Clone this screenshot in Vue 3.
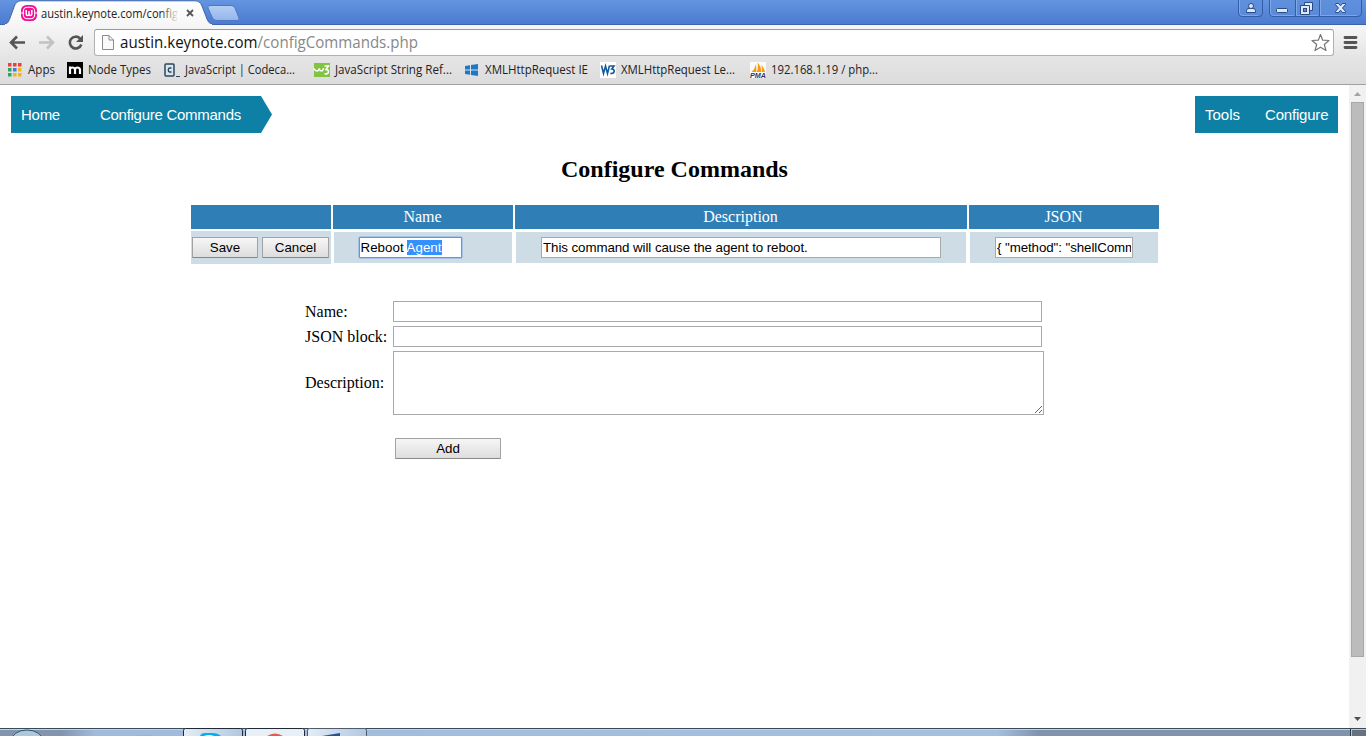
<script setup>
import { ref } from 'vue'

const bookmarks = [
  { icon: 'apps', label: 'Apps', width: 27, gap: 12 },
  { icon: 'node', label: 'Node Types', width: 63, gap: 13 },
  { icon: 'code', label: 'JavaScript | Codeca...', width: 110, gap: 19 },
  { icon: 'w3s', label: 'JavaScript String Ref...', width: 117, gap: 12 },
  { icon: 'win', label: 'XMLHttpRequest IE', width: 103, gap: 12 },
  { icon: 'w3c', label: 'XMLHttpRequest Le...', width: 114, gap: 15 },
  { icon: 'pma', label: '192.168.1.19 / php...', width: 107, gap: 0 }
]
const dots = ['#e8423a', '#e8423a', '#e8423a', '#2da562', '#3b7de8', '#f5b21a', '#2da562', '#f5b21a', '#f5b21a']
const description = ref('This command will cause the agent to reboot.')
const json = ref('{ "method": "shellCommand" }')
const form = ref({ name: '', json: '', description: '' })
</script>

<template>
  <div class="window">
    <header class="titlebar">
      <svg class="frame" width="1366" height="25" viewBox="0 0 1366 25">
        <defs>
          <linearGradient id="tab" x1="0" y1="0" x2="0" y2="1"><stop offset="0" stop-color="#fff" /><stop offset="1" stop-color="#f6f6f6" /></linearGradient>
          <linearGradient id="fade" x1="0" x2="1" y1="0" y2="0"><stop offset="0" stop-color="#fbfbfb" stop-opacity="0" /><stop offset="1" stop-color="#fbfbfb" /></linearGradient>
          <linearGradient id="newtab" x1="0" y1="0" x2="0" y2="1"><stop offset="0" stop-color="#b5cdf4" /><stop offset="1" stop-color="#94b5ec" /></linearGradient>
        </defs>
        <path d="M0 24.5H1366" stroke="#3c63ae" />
        <path d="M0 25C7 25 8 23 10 18L14 7Q16 .8 21 .8H195Q200 .8 202 6L207 19Q209 25 216 25Z" fill="url(#tab)" stroke="#3f65ae" />
        <rect x="5" y="24" width="207" height="1" fill="#f6f6f6" />
        <path d="M209 5.5H231Q234 5.5 235 8L239 18Q240 20.500 237 20.500H217Q213 20.500 212 17L208 8Q207 5.500 210 5.500Z" fill="url(#newtab)" stroke="#4c78c6" />
        <rect x="21" y="5" width="16" height="16" rx="5.500" fill="#f50f97" />
        <rect x="23.300" y="7.300" width="11.400" height="11.400" rx="4" fill="none" stroke="#fff" stroke-width="1.100" />
        <path d="M26.200 10v4q0 1.500 1.400 1.500t1.400-1.500v-3v3q0 1.500 1.400 1.500t1.400-1.500v-4" fill="none" stroke="#fff" stroke-width="1.500" />
        <path d="M21 13h2.500M34.500 13h2.500" stroke="#fff" />
        <text class="ui" x="41" y="17.500" font-size="12" textLength="137" lengthAdjust="spacingAndGlyphs" fill="#222">austin.keynote.com/config</text>
        <rect x="161" y="4" width="18" height="18" fill="url(#fade)" />
        <path d="M187 10l6 6M193 10l-6 6" stroke="#555" stroke-width="1.800" />
        <g fill="#5d8edb" fill-opacity=".6" stroke="#345da9">
          <path d="M1238.500 0V13Q1238.500 16.500 1242 16.500H1259Q1262.500 16.500 1262.500 13V0" />
          <path d="M1269.500 0V13Q1269.500 16.500 1273 16.500H1358Q1361.500 16.500 1361.500 13V0M1295.500 0V16M1319.500 0V16" />
        </g>
        <g fill="none" stroke="#8eb2ec" stroke-opacity=".7"><path d="M1239.500 0V12Q1239.500 15.500 1243 15.500H1258M1270.500 0V12Q1270.500 15.500 1274 15.500H1294M1296.500 0V15.500H1318M1320.500 0V15.500H1357" /></g>
        <g fill="#dce8fb" stroke="#294a83">
          <path d="M1246.500 12.500V10.500Q1246.500 8.500 1249 8.500H1253Q1255.500 8.500 1255.500 10.500V12.500Z" /><circle cx="1251" cy="6" r="2.500" />
          <rect x="1276.500" y="8.500" width="11" height="4" rx="1" />
          <path d="M1304.500 2.500H1312.500V10.500H1304.500Z" />
          <path d="M1300.500 5.500H1309.500V14.500H1300.500Z" /><rect x="1303.500" y="8.500" width="3" height="3" fill="#6292df" />
          <path d="M1336 3.500H1338.500L1340.500 5.800L1342.500 3.500H1345.500V4.500L1342.500 8L1345.500 11.500V12.500H1342.500L1340.500 10.200L1338.500 12.500H1335.500V11.500L1338.500 8L1335.500 4.500Z" />
        </g>
      </svg>
    </header>

    <div class="toolbar">
      <svg class="nav" width="94" height="31" viewBox="0 25 94 31">
        <g fill="none" stroke="#555" stroke-width="2.600"><path d="M11.500 42.500H25M17 36.500L11 42.500L17 48.500" /><path d="M39 42.500H52.500M47 36.500L53 42.500L47 48.500" stroke="#c2c2c2" /><path d="M80 38.500A5.900 5.900 0 1 0 81.300 44.500" /></g>
        <path d="M83 35V42H76Z" fill="#555" />
      </svg>
      <div class="omnibox">
        <svg width="340" height="25" viewBox="95 30 340 25">
          <path d="M102.500 35.500H109L113.500 40V49.500H102.500ZM109 35.500V40H113.500" fill="#fafafa" stroke="#8b8b8b" />
          <text class="ui" x="120" y="48" font-size="16" textLength="298" lengthAdjust="spacingAndGlyphs" fill="#111">austin.keynote.com<tspan fill="#888">/configCommands.php</tspan></text>
        </svg>
        <svg width="24" height="25" viewBox="1309 30 24 25"><path d="M1320.500 34.500L1322.700 40.200L1329 40.500L1324.300 44.500L1326 50.500L1320.500 47.200L1315 50.500L1316.700 44.500L1312 40.500L1318.300 40.200Z" fill="#fff" stroke="#777" stroke-linejoin="round" stroke-width="1.200" /></svg>
      </div>
      <svg class="menu" width="32" height="31" viewBox="1334 25 32 31"><path d="M1345 37.500H1356M1345 42.500H1356M1345 47.500H1356" stroke="#555" stroke-width="2.800" stroke-linecap="round" /></svg>
    </div>

    <nav class="bookmarks">
      <div v-for="b in bookmarks" :key="b.label" class="bookmark" :style="{ marginRight: b.gap + 'px' }">
        <svg v-if="b.icon === 'apps'" class="bi" width="16" height="16"><rect v-for="(c, i) in dots" :key="i" :x="(i % 3) * 5" :y="1 + Math.floor(i / 3) * 5" width="3.500" height="3.500" :fill="c" /></svg>
        <svg v-else-if="b.icon === 'node'" class="bi" width="16" height="16"><rect width="16" height="16" fill="#000" /><path d="M3 12V4.500M3 7Q3.500 5.500 5.500 5.500T8 7.500V12M8 7.500Q8.500 5.500 10.500 5.500T13 7.500V12" fill="none" stroke="#fff" stroke-width="2.200" /></svg>
        <svg v-else-if="b.icon === 'code'" class="bi" width="16" height="16"><rect x="1" y="2" width="9" height="12" rx="1" fill="#dce5ea" stroke="#29485e" stroke-width="1.500" /><path d="M7.500 6H5.500Q4.300 6 4.300 8T5.500 10H7.500" fill="none" stroke="#29485e" stroke-width="1.400" /><path d="M12 14.500H16" stroke="#29485e" /></svg>
        <svg v-else-if="b.icon === 'w3s'" class="bi" width="16" height="16"><rect y="1" width="16" height="14" fill="#83c342" /><path d="M0 6.500Q1 9 3 9T5 6.500Q6 9 7.500 9T9.500 6M10.500 4H14.500L12 7.500Q14.500 7.500 14.500 9.800T10.500 12" fill="none" stroke="#fff" stroke-width="1.500" /></svg>
        <svg v-else-if="b.icon === 'win'" class="bi" width="16" height="16"><path d="M1 4L6 3.200V7.500H1ZM7 3L14 2V7.500H7ZM1 8.500H6V12.800L1 12ZM7 8.500H14V14L7 13Z" fill="#1979ca" /></svg>
        <svg v-else-if="b.icon === 'w3c'" class="bi" width="16" height="16"><rect width="16" height="16" fill="#fff" /><path d="M1.500 3.500L3.500 11.500L5.500 4L7.500 11.500L9.500 3.500M10 4H14L11.800 7Q14.200 7 14.200 9.300T10.300 11.500" fill="none" stroke="#125b9c" stroke-width="1.600" /></svg>
        <svg v-else class="bi" width="16" height="16"><rect width="16" height="16" fill="#fafafa" /><path d="M1.500 10Q5 7 6 2L6.500 10ZM7 10Q8.500 5 7.500 .5Q11 4 11.500 10ZM12 10Q12.500 6 11 3Q14.500 6 15 10Z" fill="#f79a0c" /><text class="pma" x="0" y="15.500" textLength="16" lengthAdjust="spacingAndGlyphs">PMA</text></svg>
        <svg class="label" :width="b.width" height="18"><text class="ui" x="0" y="13" font-size="12" :textLength="b.width" lengthAdjust="spacingAndGlyphs" fill="#222">{{ b.label }}</text></svg>
      </div>
    </nav>

    <div class="viewport">
      <main class="page">
        <div class="topnav">
          <div class="crumbs"><span>Home</span><span>Configure Commands</span></div>
          <div class="tools"><span>Tools</span><span>Configure</span></div>
        </div>
        <h2>Configure Commands</h2>
        <div class="grid">
          <div class="th"></div><div class="th">Name</div><div class="th">Description</div><div class="th">JSON</div>
          <div class="td actions"><button>Save</button><button>Cancel</button></div>
          <div class="td"><div class="field focused">Reboot <mark>Agent</mark></div></div>
          <div class="td"><input v-model="description" class="field"></div>
          <div class="td"><input v-model="json" class="field"></div>
        </div>
        <form class="form" @submit.prevent>
          <label>Name:</label><input v-model="form.name">
          <label>JSON block:</label><input v-model="form.json">
          <label>Description:</label><textarea v-model="form.description"></textarea>
          <button class="add">Add</button>
        </form>
      </main>
      <aside class="scrollbar">
        <svg width="17" height="17"><path d="M5 11L8.500 7L12 11Z" fill="#a3a3a3" /></svg>
        <div class="thumb"></div>
        <svg width="17" height="17"><path d="M5 6H12L8.500 10Z" fill="#505050" /></svg>
      </aside>
    </div>

    <footer class="taskbar">
      <svg width="1366" height="8" viewBox="0 728 1366 8">
        <defs>
          <linearGradient id="task"><stop offset="0" stop-color="#8295ad" /><stop offset=".045" stop-color="#8295ad" /><stop offset=".07" stop-color="#a2bbdc" /><stop offset=".73" stop-color="#a6bfdf" /><stop offset=".76" stop-color="#8094ae" /><stop offset="1" stop-color="#8094ae" /></linearGradient>
          <linearGradient id="btn"><stop offset="0" stop-color="#e3edf5" /><stop offset="1" stop-color="#b2c7df" /></linearGradient>
        </defs>
        <rect y="728" width="1366" height="8" fill="url(#task)" />
        <path d="M0 728.500H1366" stroke="#3b4a5a" /><path d="M0 729.500H1366" stroke="#c0d5e9" />
        <ellipse cx="27" cy="741" rx="16" ry="11" fill="#afc7d6" stroke="#2a5678" />
        <rect x="137" y="735" width="15" height="1" fill="#c5b178" />
        <rect x="183.500" y="728.500" width="59" height="10" rx="2" fill="url(#btn)" stroke="#1f2a36" />
        <rect x="245.500" y="728.500" width="59" height="10" rx="2" fill="#e8eff6" stroke="#1f2a36" />
        <rect x="307.500" y="728.500" width="59" height="10" rx="2" fill="url(#btn)" stroke="#4c5c6e" />
        <path d="M200 736Q201 733 205 733H212Q218 733 221 736Z" fill="#00aff0" /><path d="M204 736Q209 734 214 736Z" fill="#fff" />
        <path d="M267 736Q275 731 283 736Z" fill="#e25b4e" /><path d="M322 736L340 733V736Z" fill="#2b5298" />
        <rect x="1351.500" y="729.500" width="16" height="10" fill="#66737f" stroke="#b9c5cf" /><path d="M1350.500 729V736" stroke="#2e3842" />
      </svg>
    </footer>
  </div>
</template>

<style>
html, body { overflow: hidden; background: #fff; }
</style>

<style scoped>
* { box-sizing: border-box; }
svg { display: block; flex: none; }
.window { width: 1366px; height: 736px; display: flex; flex-direction: column; overflow: hidden; font-family: "Liberation Serif", serif; font-size: 16px; color: #000; }
.ui { font-family: "Open Sans", "Noto Sans", sans-serif; }
.label, .bi { overflow: visible; }
.pma { font: italic bold 7px "Liberation Sans", sans-serif; fill: #33336b; }
.titlebar { height: 25px; flex: none; background: linear-gradient(#6495e0, #4a79cf); }
.toolbar { height: 31px; flex: none; display: flex; background: linear-gradient(#f6f6f6, #e6e6e6); }
.omnibox { width: 1240px; height: 27px; margin-top: 4px; display: flex; justify-content: space-between; background: #fff; border: 1px solid #b0b0b0; border-top-color: #999; border-radius: 3px; }
.bookmarks { height: 29px; flex: none; display: flex; align-items: center; padding-left: 8px; background: linear-gradient(#e5e5e5, #dcdcdc); border-bottom: 1px solid #a1a1a1; }
.bookmark { display: flex; align-items: center; }
.bi { margin-right: 5px; }
.bookmark:first-child .bi { margin-right: 4px; }
.viewport { height: 643px; flex: none; display: flex; }
.page { width: 1349px; padding: 11px; }
.topnav { display: flex; justify-content: space-between; height: 37px; font: 15px/37px "Liberation Sans", Arial, sans-serif; color: #fff; }
.crumbs { width: 261px; padding-left: 10px; display: flex; gap: 40px; letter-spacing: -.27px; background: #0e7fa5; clip-path: polygon(0 0, 250px 0, 100% 50%, 250px 100%, 0 100%); }
.tools { width: 143px; padding-left: 10px; display: flex; gap: 25px; background: #0e7fa5; }
.tools span:last-child { letter-spacing: -.2px; }
h2 { height: 28px; margin: 22px 0; font-size: 24px; line-height: 28px; text-align: center; }
.grid { width: 968px; margin-left: 180px; display: grid; grid-template-columns: 140px 180px 452px 190px; column-gap: 2px; row-gap: 2px; }
.th { height: 24px; padding-right: 1px; background: #2f7fb6; color: #fff; text-align: center; line-height: 24px; }
.td { height: 31px; margin: 1px; display: flex; justify-content: center; align-items: center; background: #cedce5; }
.actions { height: 33px; margin: 0; justify-content: flex-start; gap: 4px; padding-left: 1px; }
button { width: 66px; height: 21px; padding: 0; font: 13.330px "Liberation Sans", Arial, sans-serif; color: #000; border: 1px solid #a2a2a2; border-bottom-color: #888; border-radius: 1px; background: linear-gradient(#f6f6f6, #ddd); }
.actions button:last-child { width: 67px; }
input, textarea, .field { display: block; margin: 0; padding: 1px; border: 1px solid #a9a9a9; border-radius: 0; outline: 0; background: #fff; color: #000; font: 13.330px "Liberation Sans", Arial, sans-serif; }
.field { width: calc(100% - 50px); height: 21px; white-space: pre; overflow: hidden; letter-spacing: -.08px; }
.td:nth-child(6) .field { width: 103px; margin-right: 26px; }
.focused { line-height: 17px; letter-spacing: .02px; border: 1px solid #6a93dd; box-shadow: 0 0 0 .500px #7da7ed; border-radius: 1px; }
mark { background: #3390ff; color: #fff; }
.form { width: 739px; margin: 37px 0 0 294px; display: grid; grid-template-columns: 88px 651px; grid-template-rows: 21px 21px 64px 21px; row-gap: 4px; align-items: center; }
.form input { width: 649px; height: 21px; }
.form textarea { width: 651px; height: 64px; resize: both; }
.form .add { grid-column: 2; width: 106px; height: 21px; margin: 19px 0 0 2px; align-self: start; }
.scrollbar { width: 17px; display: flex; flex-direction: column; background: #f1f1f1; }
.thumb { width: 13px; height: 555px; margin: 0 0 54px 2px; background: #bcbcbc; border: 1px solid #a8a8a8; }
.taskbar { height: 8px; flex: none; }
</style>
